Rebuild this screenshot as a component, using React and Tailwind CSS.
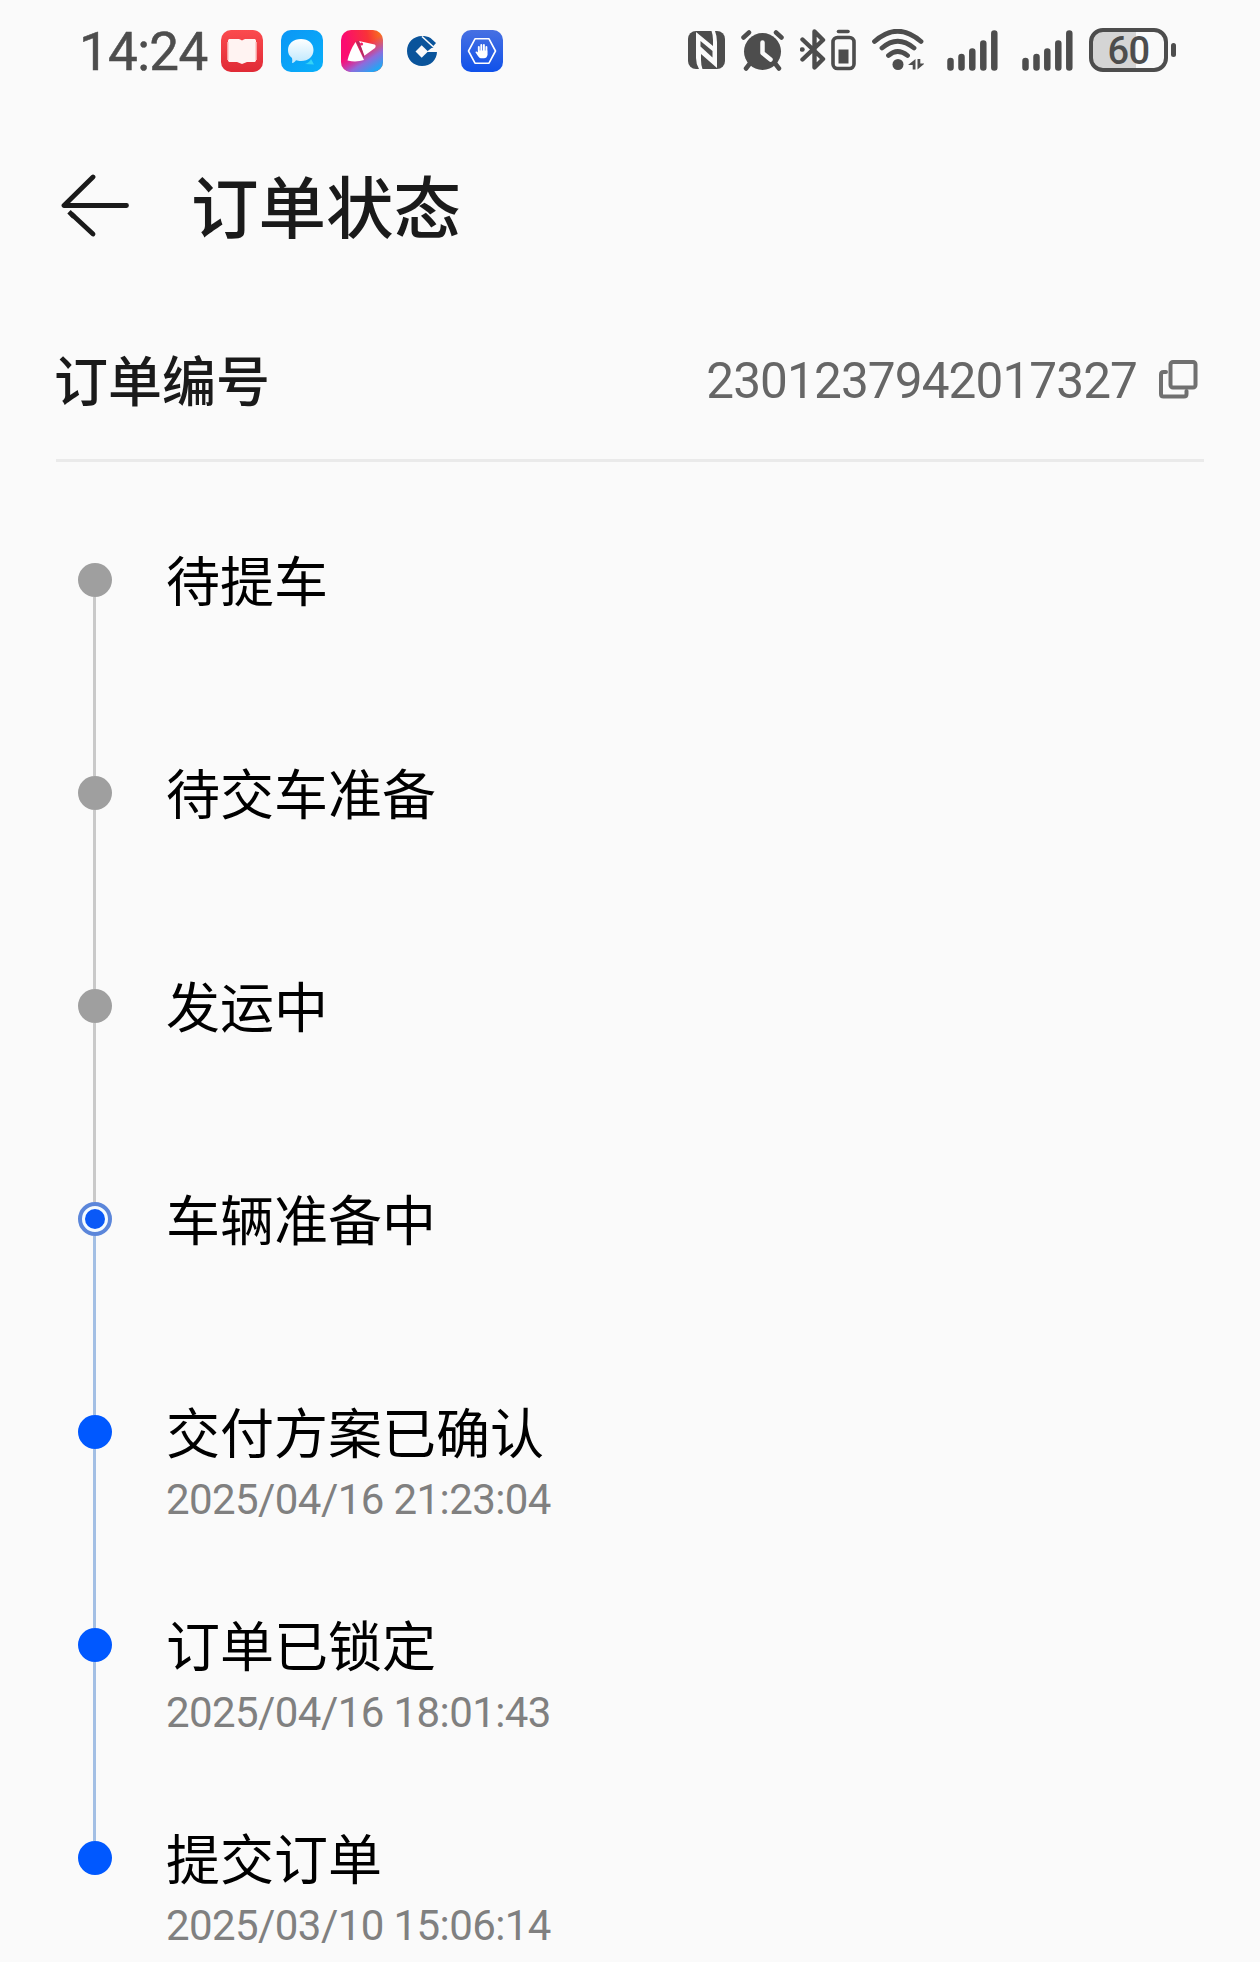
import React from 'react';
import { clsx } from 'clsx';

const STEPS = [
  { title: '待提车', state: 'pending' },
  { title: '待交车准备', state: 'pending' },
  { title: '发运中', state: 'pending' },
  { title: '车辆准备中', state: 'current' },
  { title: '交付方案已确认', state: 'done', time: '2025/04/16 21:23:04' },
  { title: '订单已锁定', state: 'done', time: '2025/04/16 18:01:43' },
  { title: '提交订单', state: 'done', time: '2025/03/10 15:06:14' },
];

function BookAppIcon() {
  return (
    <svg width="42" height="42" viewBox="0 0 42 42">
      <defs>
        <linearGradient id="book" x1="0" y1="0" x2="0" y2="1">
          <stop offset="0" stopColor="#fb4b4e" />
          <stop offset="1" stopColor="#e02a36" />
        </linearGradient>
      </defs>
      <rect width="42" height="42" rx="10" fill="url(#book)" />
      <path d="M7 11c0-1.500.8-2 2-2h7.500c2 0 3.500.7 4.500 1.500 1-.8 2.500-1.500 4.500-1.500H33c1.200 0 2 .5 2 2v19c0 1.500-.8 2-2 2h-7l-5 2-5-2H9c-1.200 0-2-.5-2-2z" fill="#fff3f2" />
      <path d="M7 12v18M35 12v18" stroke="#fbc4c2" strokeWidth="1.500" />
    </svg>
  );
}

function ChatAppIcon() {
  return (
    <svg width="42" height="42" viewBox="0 0 42 42">
      <defs>
        <linearGradient id="chat" x1="0" y1="0" x2="1" y2="1">
          <stop offset="0" stopColor="#0c96f5" />
          <stop offset="1" stopColor="#08b0fa" />
        </linearGradient>
        <linearGradient id="bubble" x1="0" y1="0" x2="0" y2="1">
          <stop offset="0" stopColor="#fff" />
          <stop offset="1" stopColor="#bfe8fd" />
        </linearGradient>
      </defs>
      <rect width="42" height="42" rx="10" fill="url(#chat)" />
      <path d="M24 34c3-1 5-2.500 6-5l3 5.500z" fill="#35d3f6" />
      <path d="M20 9C27.500 9 32.500 13.600 32.500 20s-5 11-12.500 11c-2 0-3.500-.3-5-.8-1 1.500-2 2.500-4 2.800.4-1.500.4-3.300 0-5C8.100 26 7 23.300 7 20 7 13.600 12.500 9 20 9z" fill="url(#bubble)" />
    </svg>
  );
}

function VideoAppIcon() {
  return (
    <svg width="42" height="42" viewBox="0 0 42 42">
      <defs>
        <linearGradient id="vid" x1="0.100" y1="0.300" x2="1" y2="0.100">
          <stop offset="0" stopColor="#fb0c70" />
          <stop offset="0.600" stopColor="#f93238" />
          <stop offset="1" stopColor="#f87a1c" />
        </linearGradient>
        <linearGradient id="vid2" x1="0.400" y1="0.450" x2="0.750" y2="1">
          <stop offset="0" stopColor="#d62fb0" stopOpacity="0" />
          <stop offset="0.550" stopColor="#8e6bdc" />
          <stop offset="1" stopColor="#20a7f5" />
        </linearGradient>
      </defs>
      <rect width="42" height="42" rx="10" fill="url(#vid)" />
      <rect width="42" height="42" rx="10" fill="url(#vid2)" />
      <path d="M14.500 12 23 30Q15 32.500 6.500 30.500 8.500 21 14.500 12z" fill="#fff" />
      <path d="M18 11 33.500 14.500Q35.500 15.500 34 18L23 26z" fill="#fff" />
      <path d="M15 11.500 18 11 23.500 26 22.500 27.500z" fill="#b8285f" />
      <circle cx="20.500" cy="14" r="1.600" fill="#f0246a" />
    </svg>
  );
}

function BankAppIcon() {
  return (
    <svg width="42" height="42" viewBox="0 0 42 42">
      <path
        fill="#0a549b"
        d="M21 6c3 0 6 .6 8.500 2L35 13 31.500 17 36 21.500C36 30 29.500 36 21 36S6 29.500 6 21 12.500 6 21 6z"
      />
      <path d="M20.700 15.300 14.500 21.500 20.700 27.700 27 21.500z" fill="#fafafa" />
      <path d="M25.500 22 30.500 18H37V22z" fill="#fafafa" />
      <path d="M21 6.500 32.500 17" stroke="#fafafa" strokeWidth="1.600" />
    </svg>
  );
}

function GuardAppIcon() {
  return (
    <svg width="42" height="42" viewBox="0 0 42 42">
      <defs>
        <linearGradient id="guard" x1="0" y1="0" x2="0" y2="1">
          <stop offset="0" stopColor="#4770e2" />
          <stop offset="1" stopColor="#0f51ea" />
        </linearGradient>
      </defs>
      <rect width="42" height="42" rx="10" fill="url(#guard)" />
      <path d="M14 8.800h14L34.500 21 28 33.200H14L7.500 21z" fill="none" stroke="#fff" strokeWidth="1.600" strokeLinejoin="round" />
      <path d="M17.800 17v7M20.300 15v8M22.900 15v8M25.400 17v8" stroke="#fff" strokeWidth="1.900" strokeLinecap="round" />
      <path d="M17 20.500h9.300V25c0 2-1.500 3.300-3.300 3.300h-2c-2 0-3.300-1-4.200-2.600L14.300 22c.8-.9 1.800-.6 2.700.5z" fill="#fff" />
    </svg>
  );
}

function NfcIcon() {
  return (
    <svg width="37" height="38" viewBox="0 0 37 38" fill="#4d4d4d">
      <rect width="37" height="38" rx="8" />
      <path d="M8 1 25 15V9Q25 4 23.500 0H27Q29 5 29 11V37L13 23V29Q13 34 14.500 38H11Q8 33 8 27z" fill="#fafafa" />
      <path d="M12.500 10 24.500 20V26.500L12.500 15.500z" />
    </svg>
  );
}

function AlarmIcon() {
  return (
    <svg width="43" height="41" viewBox="0 0 43 41" fill="none" strokeLinecap="round">
      <circle cx="21.500" cy="21.500" r="18.500" fill="#4d4d4d" />
      <path d="M2.500 7.500 8 2.500M35 2.500 40.500 7.500M8.500 34 5 38.500M34.500 34 38 38.500" stroke="#4d4d4d" strokeWidth="4.500" />
      <path d="M21.500 12.500v10.500l8 6.500" stroke="#fafafa" strokeWidth="4.500" strokeLinejoin="round" />
    </svg>
  );
}

function BluetoothBatteryIcon() {
  return (
    <svg width="56" height="42" viewBox="0 0 56 42" fill="none" stroke="#4d4d4d" strokeLinejoin="round" strokeLinecap="round">
      <path d="M2.500 10.500 23 30 14.500 38.500V2.500L23 11 2.500 30.500" strokeWidth="4.400" />
      <path d="M2 20.500h.5" strokeWidth="4.400" />
      <rect x="33" y="8.500" width="21" height="31" rx="4.500" strokeWidth="3.600" />
      <path d="M38.500 2.500h9.500" strokeWidth="3.600" />
      <rect x="38.500" y="20.500" width="10" height="14" fill="#4d4d4d" stroke="none" />
    </svg>
  );
}

function WifiIcon() {
  return (
    <svg width="52" height="42" viewBox="0 0 52 42" fill="none" stroke="#4d4d4d" strokeWidth="4.800" strokeLinecap="round">
      <path d="M2.500 12.500Q25.500-8 49 12.500M10 19Q25.500 5.500 42 19M16.500 26.500Q25.500 18.500 35.500 26.500" />
      <circle cx="26" cy="35.500" r="5.500" fill="#4d4d4d" stroke="none" />
      <path d="M43.500 30v10.500h-2.800v-4.500H36zM45.500 40.500V30h2.800v4.500H52.500z" fill="#4d4d4d" stroke="none" />
    </svg>
  );
}

function SignalIcon() {
  return (
    <svg width="51" height="41" viewBox="0 0 51 41" stroke="#4d4d4d" strokeWidth="6.500" strokeLinecap="round">
      <path d="M3.500 31v6.500M14.500 27v10.500M25.300 21.500v16M36.300 13.500v24M47.300 3.500v34" />
    </svg>
  );
}

function BatteryBadge() {
  return (
    <div className="flex items-center gap-[3px]">
      <div className="flex h-[44px] w-[79px] items-center justify-center rounded-[14px] border-[4px] border-[#4d4d4d] bg-linear-to-r from-[#d5d5d5] from-60% to-[#fafafa] to-60% pt-[2px] font-[Roboto] text-[38px] leading-none font-medium tracking-[-0.500px] text-[#4d4d4d]">
        60
      </div>
      <div className="h-[14px] w-[5px] rounded-full bg-[#4d4d4d]" />
    </div>
  );
}

function StatusBar() {
  return (
    <div className="flex h-[102px] items-center justify-between pr-[84px] pl-[79px]">
      <div className="flex items-center">
        <span className="w-[142px] pt-[2px] font-[Roboto] text-[53px] leading-none tracking-[-0.700px] text-[#4d4d4d] [-webkit-text-stroke:0.500px_#4d4d4d]">14:24</span>
        <div className="flex items-center gap-[18px]">
          <BookAppIcon />
          <ChatAppIcon />
          <VideoAppIcon />
          <BankAppIcon />
          <GuardAppIcon />
        </div>
      </div>
      <div className="flex items-center gap-[16px] pb-[2px]">
        <NfcIcon />
        <AlarmIcon />
        <BluetoothBatteryIcon />
        <WifiIcon />
        <div className="flex gap-6 pl-[7px]">
          <SignalIcon />
          <SignalIcon />
        </div>
        <BatteryBadge />
      </div>
    </div>
  );
}

function BackArrow() {
  return (
    <svg width="70" height="64" viewBox="0 0 70 64" fill="none" stroke="#1a1a1a" strokeWidth="4.800" strokeLinecap="round">
      <path d="M33 3 4 31.500H66.500" strokeLinejoin="round" />
      <path d="M12 40.500 33 60" />
      <path d="M9 37.800 14 42.700" strokeLinecap="butt" />
    </svg>
  );
}

function CopyIcon() {
  return (
    <svg width="40" height="42" viewBox="0 0 40 42" fill="none" stroke="#707070" strokeWidth="4" strokeLinecap="round">
      <rect x="12.500" y="3" width="25" height="25.500" rx="2.500" />
      <path d="M8 13H5.500Q3 13 3 15.500V35Q3 37.500 5.500 37.500H26Q28.500 37.500 28.500 35V32" />
    </svg>
  );
}

function StepDot({ state }) {
  if (state === 'current') {
    return (
      <div className="flex size-[34px] items-center justify-center rounded-full border-[4px] border-[#5b86da] bg-[#f4fbff]">
        <div className="size-[20px] rounded-full bg-[#0a59f7]" />
      </div>
    );
  }
  return <div className={clsx('size-[34px] rounded-full', state === 'done' ? 'bg-[#0058ff]' : 'bg-[#9f9f9f]')} />;
}

function Step({ step, last }) {
  return (
    <li className="flex h-[213px] gap-[54px]">
      <div className="flex w-[34px] flex-col">
        <StepDot state={step.state} />
        {!last && <div className={clsx('ml-[15px] w-[3px] flex-1', step.state === 'pending' ? 'bg-[#c9c9c9]' : 'bg-[#a3bfe4]')} />}
      </div>
      <div className="-mt-[11px]">
        <p className="text-[54px] leading-[54px] text-black">{step.title}</p>
        {step.time && (
          <p className="mt-[17px] font-[Roboto] text-[42px] leading-[50px] tracking-[-0.580px] text-[#808080]">{step.time}</p>
        )}
      </div>
    </li>
  );
}

export default function App() {
  return (
    <div className="h-[1962px] w-[1260px] overflow-hidden bg-[#fafafa] font-['Noto_Sans_CJK_SC',sans-serif]">
      <StatusBar />
      <header className="flex h-[208px] items-center gap-[61px] pl-[60px]">
        <BackArrow />
        <h1 className="pb-[5px] text-[67.500px] leading-none font-medium text-[#1a1a1a]">订单状态</h1>
      </header>
      <section className="mx-[56px] flex h-[152px] items-center justify-between border-b-[3px] border-[#eaeaea] pb-[9px]">
        <h2 className="-ml-[2px] pb-[3px] text-[54px] leading-none font-medium text-[#1a1a1a]">订单编号</h2>
        <div className="flex items-center gap-[21px] pr-[6px]">
          <span className="pt-[3px] font-[Roboto] text-[49.500px] leading-none tracking-[-0.900px] text-[#666666]">2301237942017327</span>
          <CopyIcon />
        </div>
      </section>
      <ol className="mt-[101px] pl-[78px]">
        {STEPS.map((step, i) => (
          <Step key={step.title} step={step} last={i === STEPS.length - 1} />
        ))}
      </ol>
    </div>
  );
}
